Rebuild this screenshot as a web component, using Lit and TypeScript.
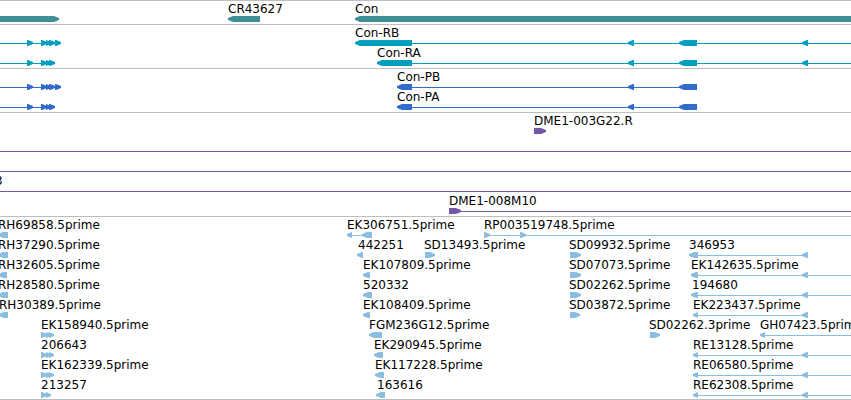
import { LitElement, html, svg, css } from "lit";
import { customElement } from "lit/decorators.js";

type Span = [from: number, to: number];
type Label = [text: string, x: number];
interface Row {
  labels?: Label[];
  left?: Span[];
  right?: Span[];
  lines?: Span[];
}
interface Track {
  kind: string;
  name: string;
  rows: Row[];
}

// A connector or bar that runs on past the window's right edge.
const END = -1;

const tracks: Track[] = [
  {
    kind: "gene",
    name: "Genes",
    rows: [
      {
        labels: [["CR43627", 228], ["Con", 355]],
        right: [[-10, 59]],
        left: [[228, 260], [355, END]],
      },
    ],
  },
  {
    kind: "rna",
    name: "Transcripts",
    rows: [
      {
        labels: [["Con-RB", 355]],
        right: [[27, 33], [41, 47], [46, 51], [49, 55], [55, 61]],
        left: [[355, 412], [628, 634], [679, 697], [802, 808]],
        lines: [[0, 58], [412, END]],
      },
      {
        labels: [["Con-RA", 377]],
        right: [[27, 33], [41, 47], [46, 51], [49, 55]],
        left: [[377, 412], [628, 634], [679, 697], [802, 808]],
        lines: [[0, 52], [412, END]],
      },
    ],
  },
  {
    kind: "cds",
    name: "Polypeptides",
    rows: [
      {
        labels: [["Con-PB", 397]],
        right: [[27, 33], [41, 47], [46, 51], [49, 55], [55, 61]],
        left: [[397, 412], [628, 634], [679, 697]],
        lines: [[0, 58], [412, 682]],
      },
      {
        labels: [["Con-PA", 397]],
        right: [[27, 33], [41, 47], [46, 51], [49, 55]],
        left: [[397, 412], [628, 634], [679, 697]],
        lines: [[0, 52], [412, 682]],
      },
    ],
  },
  {
    kind: "clone",
    name: "Clones",
    rows: [
      { labels: [["DME1-003G22.R", 534]], right: [[534, 546]] },
      { lines: [[0, END]] },
      { lines: [[0, END]] },
      { labels: [["3", -5]], lines: [[0, END]] },
      { labels: [["DME1-008M10", 449]], right: [[449, 461]], lines: [[458, END]] },
    ],
  },
  {
    kind: "est",
    name: "cDNA and EST",
    rows: [
      {
        labels: [["RH69858.5prime", -2], ["EK306751.5prime", 347], ["RP003519748.5prime", 484]],
        left: [[-2, 8], [347, 352], [362, 372]],
        right: [[484, 490], [520, 526]],
        lines: [[350, 366], [488, END]],
      },
      {
        labels: [["RH37290.5prime", -2], ["442251", 358], ["SD13493.5prime", 424], ["SD09932.5prime", 569], ["346953", 689]],
        left: [[-2, 8], [357, 363], [689, 698], [802, 808]],
        right: [[425, 435], [570, 581]],
        lines: [[697, 806]],
      },
      {
        labels: [["RH32605.5prime", -2], ["EK107809.5prime", 363], ["SD07073.5prime", 569], ["EK142635.5prime", 691]],
        left: [[-2, 7], [363, 370], [691, 698], [802, 808]],
        right: [[570, 581]],
        lines: [[697, END]],
      },
      {
        labels: [["RH28580.5prime", -2], ["520332", 363], ["SD02262.5prime", 569], ["194680", 692]],
        left: [[-2, 8], [363, 372], [691, 698], [802, 808]],
        right: [[570, 581]],
        lines: [[697, END]],
      },
      {
        labels: [["RH30389.5prime", -1], ["EK108409.5prime", 363], ["SD03872.5prime", 569], ["EK223437.5prime", 693]],
        left: [[-1, 8], [363, 370], [693, 698], [802, 808]],
        right: [[570, 580]],
        lines: [[697, 806]],
      },
      {
        labels: [["EK158940.5prime", 41], ["FGM236G12.5prime", 369], ["SD02262.3prime", 649], ["GH07423.5prime", 760]],
        left: [[369, 382], [760, 765]],
        right: [[41, 47], [46, 51], [49, 54], [650, 660]],
        lines: [[764, END]],
      },
      {
        labels: [["206643", 41], ["EK290945.5prime", 374], ["RE13128.5prime", 693]],
        left: [[374, 383], [693, 698], [802, 808]],
        right: [[41, 47], [46, 51], [49, 54]],
        lines: [[697, END]],
      },
      {
        labels: [["EK162339.5prime", 41], ["EK117228.5prime", 375], ["RE06580.5prime", 693]],
        left: [[375, 384], [693, 698], [802, 808]],
        right: [[41, 47], [46, 51], [49, 54]],
        lines: [[697, END]],
      },
      {
        labels: [["213257", 41], ["163616", 377], ["RE62308.5prime", 693]],
        left: [[376, 385], [693, 698], [802, 808]],
        right: [[41, 47], [46, 51]],
        lines: [[697, END]],
      },
    ],
  },
];

// Length of an arrow's pointed head; short features are all head.
const head = (a: number, b: number) => (b === END ? 5 : Math.min(5, b - a));

const leftArrow = ([a, b]: Span) => {
  const neck = a + head(a, b);
  const point = svg`<path d="M${a} 2V4L${neck} 6V0Z"/>`;
  const width = b === END ? "100%" : b - neck;
  return svg`${point}<rect x=${neck} y="0" width=${width} height="6"/>`;
};

const rightArrow = ([a, b]: Span) => {
  const neck = b - head(a, b);
  return svg`<path d="M${b} 2V4L${neck} 6H${a}V0H${neck}Z"/>`;
};

const line = ([a, b]: Span) =>
  svg`<rect x=${a} y="3" width=${b === END ? "100%" : b - a} height="1"/>`;

@customElement("feature-row")
class FeatureRow extends LitElement {
  static properties = { row: { attribute: false } };
  declare row: Row;

  static styles = css`
    :host {
      display: block;
    }
    .labels {
      position: relative;
      height: 14px;
      color: #000;
    }
    .label {
      position: absolute;
      top: 0;
      white-space: nowrap;
    }
    .glyphs {
      display: block;
      width: 100%;
      height: 6px;
      fill: currentColor;
    }
  `;

  render() {
    const { labels = [], left = [], right = [], lines = [] } = this.row;
    return html`
      <div class="labels">
        ${labels.map(([text, x]) => html`<span class="label" style="left:${x}px">${text}</span>`)}
      </div>
      <svg class="glyphs" aria-hidden="true">
        ${lines.map(line)}${left.map(leftArrow)}${right.map(rightArrow)}
      </svg>
    `;
  }
}

@customElement("app-root")
class AppRoot extends LitElement {
  static styles = css`
    :host {
      display: block;
      overflow: hidden;
      background: #fff;
      font: 12px/14px "DejaVu Sans", sans-serif;
    }
    .track {
      border-top: 1px solid #bebebe;
      padding: 1px 0 2px;
    }
    .track:last-child {
      padding-bottom: 1px;
      border-bottom: 1px solid #bebebe;
    }
    .gene {
      color: #3f8f96;
    }
    .rna {
      color: #009fc0;
    }
    .cds {
      color: #316ccd;
    }
    .clone {
      color: #7358a8;
    }
    .est {
      color: #8abddf;
    }
  `;

  render() {
    return html`<main>
      ${tracks.map(
        (t) => html`<section class="track ${t.kind}" aria-label=${t.name}>
          ${t.rows.map((r) => html`<feature-row .row=${r}></feature-row>`)}
        </section>`
      )}
    </main>`;
  }
}
